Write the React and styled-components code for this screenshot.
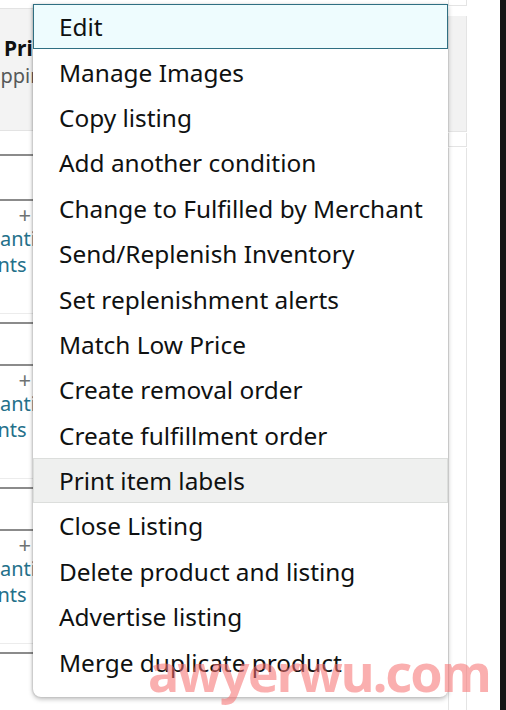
import styled, { createGlobalStyle } from 'styled-components';

const GlobalStyle = createGlobalStyle`
    html, body {
        margin: 0;
        padding: 0;
        background: #fff;
        overflow: hidden;
    }
    body {
        font-family: 'Noto Sans', 'Liberation Sans', sans-serif;
    }
`;

const menuItems = [
    { id: 1, text: 'Edit', state: 'focus' },
    { id: 2, text: 'Manage Images' },
    { id: 3, text: 'Copy listing' },
    { id: 4, text: 'Add another condition' },
    { id: 5, text: 'Change to Fulfilled by Merchant' },
    { id: 6, text: 'Send/Replenish Inventory' },
    { id: 7, text: 'Set replenishment alerts' },
    { id: 8, text: 'Match Low Price' },
    { id: 9, text: 'Create removal order' },
    { id: 10, text: 'Create fulfillment order' },
    { id: 11, text: 'Print item labels', state: 'hover' },
    { id: 12, text: 'Close Listing' },
    { id: 13, text: 'Delete product and listing' },
    { id: 14, text: 'Advertise listing' },
    { id: 15, text: 'Merge duplicate product' },
];

const Page = styled.div`
    position: relative;
    width: 506px;
    height: 710px;
    display: flex;
    overflow: hidden;
    background: #fff;
`;

const Column = styled.div`
    width: ${(p) => p.$width}px;
    flex-shrink: 0;
    display: flex;
    flex-direction: column;
    overflow: hidden;
    white-space: nowrap;
`;

const TopStrip = styled.div`
    height: 8px;
    border-bottom: 1px solid #e3e3e3;
    flex-shrink: 0;
`;

const HeaderCell = styled.div`
    height: 122px;
    flex-shrink: 0;
    background: #f3f3f3;
    display: flex;
    flex-direction: column;
    justify-content: flex-end;
    padding: 0 0 40px 4px;
    box-sizing: border-box;
    border-bottom: 1px solid #e3e3e3;
`;

const HeaderTitle = styled.div`
    font-size: 21px;
    font-weight: 700;
    color: #0f1111;
    line-height: 28px;
`;

const HeaderSub = styled.div`
    font-size: 20px;
    color: #565959;
    line-height: 28px;
    margin-left: -32px;
`;

const Gap = styled.div`
    height: ${(p) => p.$height}px;
    margin-top: ${(p) => p.$top || 0}px;
    flex-shrink: 0;
    border-top: 2px solid #8b8b8b;
    box-sizing: border-box;
`;

const RowCell = styled.div`
    height: 123px;
    flex-shrink: 0;
    border-top: 2px solid #8b8b8b;
    box-sizing: border-box;
    display: flex;
    flex-direction: column;
    position: relative;

    &::after {
        content: '';
        position: absolute;
        left: 0;
        right: 0;
        bottom: 8px;
        border-bottom: 1px solid #ececec;
    }
`;

const Plus = styled.div`
    align-self: flex-end;
    font-size: 22px;
    line-height: 24px;
    color: #6f7373;
    margin-top: 1px;
    margin-right: 2px;
`;

const LinkText = styled.div`
    font-size: 20px;
    line-height: 26px;
    color: #24708a;
    margin-left: ${(p) => p.$left}px;
`;

const Price = styled.div`
    font-size: 20px;
    color: #565959;
    line-height: 24px;
    margin-top: 42px;
    margin-left: 1px;
`;

const RightCell = styled.div`
    flex-shrink: 0;
    height: ${(p) => p.$height}px;
    margin-top: ${(p) => p.$top || 0}px;
    background: ${(p) => (p.$gray ? '#f2f2f2' : '#fff')};
    border: 1px solid #e4e4e4;
    border-top: none;
    box-sizing: border-box;
    margin-right: 1px;
`;

const Edge = styled.div`
    width: 6px;
    flex-shrink: 0;
    background: #161616;
`;

const Menu = styled.ul`
    position: absolute;
    left: 33px;
    top: 4px;
    width: 415px;
    margin: 0;
    padding: 0 0 12px;
    list-style: none;
    background: #fff;
    border-radius: 0 0 8px 8px;
    box-shadow: 0 2px 5px rgba(0, 0, 0, 0.28), -1px 0 2px rgba(0, 0, 0, 0.12);
    box-sizing: border-box;
`;

const MenuItem = styled.li`
    height: 45.4px;
    display: flex;
    align-items: center;
    padding-left: 25px;
    box-sizing: border-box;
    font-size: 24.4px;
    color: #0f1111;
    white-space: nowrap;
    background: ${(p) =>
        p.$state === 'focus' ? '#eefcfe' : p.$state === 'hover' ? '#eff0ef' : '#fff'};
    border: ${(p) => (p.$state === 'focus' ? '1.5px' : '1px')} solid
        ${(p) =>
            p.$state === 'focus' ? '#2f6f82' : p.$state === 'hover' ? '#dcdedc' : 'transparent'};
`;

const Watermark = styled.div`
    position: absolute;
    left: 148px;
    top: 646px;
    font-family: 'Noto Sans', sans-serif;
    font-weight: 700;
    font-size: 52px;
    line-height: 52px;
    letter-spacing: -1.9px;
    color: rgba(246, 110, 110, 0.55);
    pointer-events: none;
`;

function ProductRow() {
    return (
        <>
            <RowCell>
                <Plus>+</Plus>
                <LinkText $left={-28}>Quantity</LinkText>
                <LinkText $left={-92}>Adjustments</LinkText>
            </RowCell>
            <Gap $height={42} />
        </>
    );
}

export default function App() {
    return (
        <>
            <GlobalStyle />
            <Page>
                <Column $width={33}>
                    <TopStrip />
                    <HeaderCell>
                        <HeaderTitle>Price</HeaderTitle>
                        <HeaderSub>Shipping</HeaderSub>
                    </HeaderCell>
                    <Gap $height={45} $top={23} />
                    <ProductRow />
                    <ProductRow />
                    <ProductRow />
                    <Price>$0.00</Price>
                </Column>
                <Column $width={415} />
                <Column $width={20}>
                    <RightCell $height={6} />
                    <RightCell $height={116} $top={10} $gray />
                    <RightCell $height={14} $top={1} />
                    <RightCell $height={580} $top={1} />
                </Column>
                <Column $width={32} />
                <Edge />
                <Menu>
                    {menuItems.map((item) => {
                        const { id, text, state } = item;
                        return (
                            <MenuItem key={id} $state={state}>
                                {text}
                            </MenuItem>
                        );
                    })}
                </Menu>
                <Watermark>awyerwu.com</Watermark>
            </Page>
        </>
    );
}
